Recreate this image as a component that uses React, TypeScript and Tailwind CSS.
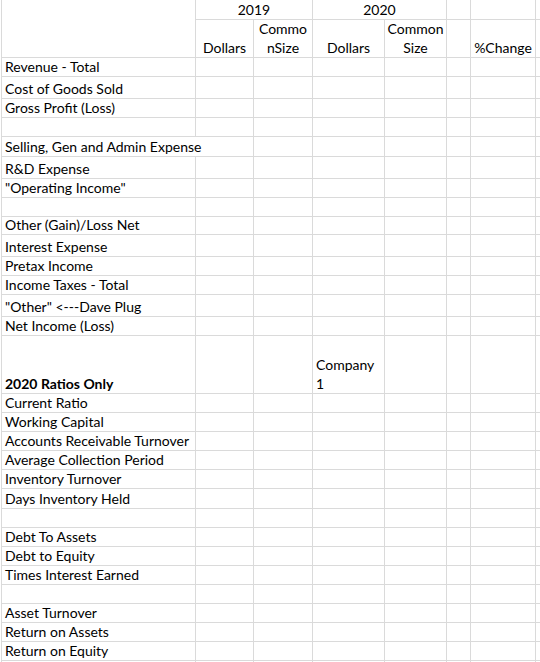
const H: Record<number, string> = {
  18: "h-[18px]",
  19: "h-[19px]",
  20: "h-[20px]",
  22: "h-[22px]",
  58: "h-[58px]",
};

type Row = { h: number; a?: string; bold?: boolean; d?: string; wide?: boolean };

const rows: Row[] = [
  { h: 19, a: "Revenue - Total" },
  { h: 22, a: "Cost of Goods Sold" },
  { h: 19, a: "Gross Profit (Loss)" },
  { h: 19 },
  { h: 20, a: "Selling, Gen and Admin Expense", wide: true },
  { h: 22, a: "R&D Expense" },
  { h: 19, a: '"Operating Income"' },
  { h: 19 },
  { h: 18, a: "Other (Gain)/Loss Net" },
  { h: 22, a: "Interest Expense" },
  { h: 19, a: "Pretax Income" },
  { h: 19, a: "Income Taxes - Total" },
  { h: 22, a: '"Other" <---Dave Plug' },
  { h: 19, a: "Net Income (Loss)" },
  { h: 58, a: "2020 Ratios Only", bold: true, d: "Company 1" },
  { h: 19, a: "Current Ratio" },
  { h: 19, a: "Working Capital" },
  { h: 19, a: "Accounts Receivable Turnover" },
  { h: 19, a: "Average Collection Period" },
  { h: 19, a: "Inventory Turnover" },
  { h: 20, a: "Days Inventory Held" },
  { h: 19 },
  { h: 19, a: "Debt To Assets" },
  { h: 19, a: "Debt to Equity" },
  { h: 19, a: "Times Interest Earned" },
  { h: 19 },
  { h: 19, a: "Asset Turnover" },
  { h: 19, a: "Return on Assets" },
  { h: 19, a: "Return on Equity" },
  { h: 20 },
];

const cell = "border-b border-r border-[#dadada] flex items-end px-[3px] leading-[19px]";

export default function App() {
  return (
    <div
      className="w-[540px] h-[662px] overflow-hidden bg-white pl-px text-[14px] text-black"
      style={{ fontFamily: "Lato, 'Open Sans', sans-serif" }}
    >
      <div className="border-l border-[#dadada]">
        {/* header rows */}
        <div className="flex">
          <div className={`${cell} w-[194px] h-[58px] shrink-0`} />
          <div className="flex flex-col flex-1">
            <div className="flex h-[20px]">
              <div className={`${cell} w-[117px] justify-center`}>2019</div>
              <div className={`${cell} w-[134px] justify-center`}>2020</div>
              <div className={`${cell} w-[24px]`} />
              <div className={`${cell} w-[65px]`} />
              <div className="border-b border-[#dadada] flex-1" />
            </div>
            <div className="flex h-[38px]">
              <div className={`${cell} w-[58px] justify-center`}>Dollars</div>
              <div className={`${cell} w-[59px] justify-center text-center`}>
                Commo
                <br />
                nSize
              </div>
              <div className={`${cell} w-[72px] justify-center`}>Dollars</div>
              <div className={`${cell} w-[62px] justify-center text-center`}>
                Common
                <br />
                Size
              </div>
              <div className={`${cell} w-[24px]`} />
              <div className={`${cell} w-[65px] justify-center`}>%Change</div>
              <div className="border-b border-[#dadada] flex-1" />
            </div>
          </div>
        </div>

        {rows.map((r, i) => (
          <div key={i} className={`flex ${H[r.h]}`}>
            <div
              className={`${r.wide ? "border-b border-[#dadada] flex items-end px-[3px] leading-[19px] w-[195px]" : `${cell} w-[194px]`} shrink-0 whitespace-nowrap ${r.bold ? "font-bold" : ""}`}
            >
              {r.a}
            </div>
            {!r.wide && <div className={`${cell} w-[58px] shrink-0`} />}
            {r.wide && <div className={`${cell} w-[57px] shrink-0`} />}
            <div className={`${cell} w-[59px] shrink-0`} />
            <div className={`${cell} w-[72px] shrink-0 flex-col !items-start justify-end`}>
              {r.d === "Company 1" ? (
                <>
                  <span>Company</span>
                  <span>1</span>
                </>
              ) : null}
            </div>
            <div className={`${cell} w-[62px] shrink-0`} />
            <div className={`${cell} w-[24px] shrink-0`} />
            <div className={`${cell} w-[65px] shrink-0`} />
            <div className="border-b border-[#dadada] flex-1" />
          </div>
        ))}
      </div>
    </div>
  );
}
